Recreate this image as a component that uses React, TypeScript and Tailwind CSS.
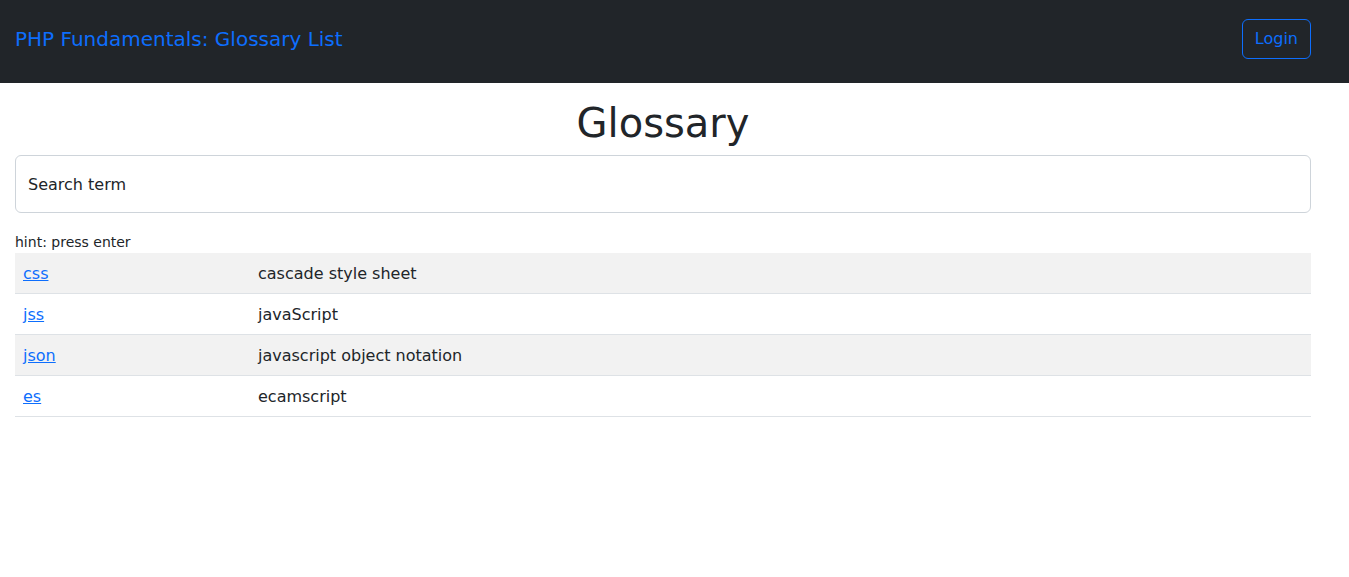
import React from "react";

const rows = [
  { term: "css", def: "cascade style sheet" },
  { term: "jss", def: "javaScript" },
  { term: "json", def: "javascript object notation" },
  { term: "es", def: "ecamscript" },
];

export default function App() {
  return (
    <div className="min-h-[577px] bg-white text-[#212529] font-['DejaVu_Sans',sans-serif] text-base leading-6">
      <nav className="h-[83px] bg-[#212529]">
        <div className="h-[77px] pl-[15px] pr-[38px] flex items-center justify-between">
          <a href="#" className="text-[20px] leading-[30px] text-[#0d6efd] no-underline mt-[1px]">
            PHP Fundamentals: Glossary List
          </a>
          <button className="h-[40px] px-3 border border-[#0d6efd] rounded-[6px] text-[#0d6efd] text-base leading-6">
            Login
          </button>
        </div>
      </nav>
      <main className="pl-[15px] pr-[38px] pt-4">
        <h1 className="text-[40px] leading-[48px] text-center font-normal mb-2">Glossary</h1>
        <div className="relative h-[58px] border border-[#ced4da] rounded-[6px] flex items-center px-3 pt-[2px]">
          <span className="text-base text-[#212529]">Search term</span>
        </div>
        <div className="mt-[19px] text-[14px] leading-[21px]">hint: press enter</div>
        <div>
          {rows.map((r, i) => (
            <div
              key={r.term}
              className={`grid grid-cols-[235px_1fr] border-b border-[#dee2e6] ${i % 2 === 0 ? "bg-[#f2f2f2]" : "bg-white"}`}
            >
              <div className="px-2 pt-[9px] pb-[7px]">
                <a href="#" className="text-[#0d6efd] underline">{r.term}</a>
              </div>
              <div className="px-2 pt-[9px] pb-[7px]">{r.def}</div>
            </div>
          ))}
        </div>
      </main>
    </div>
  );
}
